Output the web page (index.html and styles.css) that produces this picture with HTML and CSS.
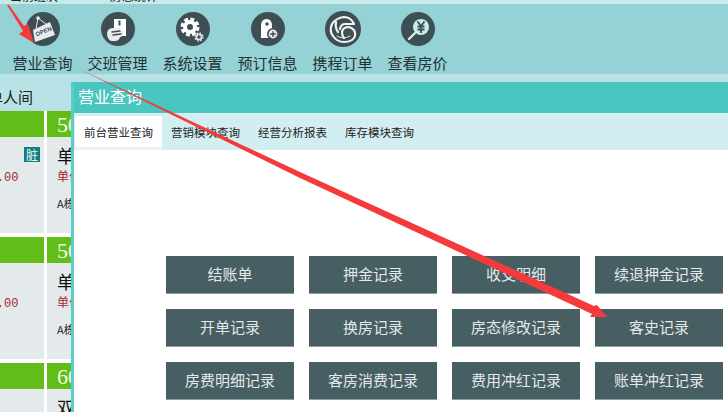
FILE: index.html
```html
<!DOCTYPE html>
<html lang="zh-CN">
<head>
    <meta charset="UTF-8">
    <title>营业查询</title>
    <link rel="stylesheet" href="styles.css">
</head>
<body>

    <!-- Top strip, cut off by the screenshot -->
    <div class="top-strip">
        <span>当前班次</span>
        <span>房态统计</span>
    </div>

    <!-- Toolbar -->
    <nav class="toolbar">
        <a class="tool">
            <svg class="tool-icon" viewBox="0 0 34 34">
                <circle class="disc" cx="17" cy="17" r="17"/>
                <path class="line" d="M10 17 L12 6 L20 12"/>
                <circle class="pale" cx="12" cy="6" r="1.8"/>
                <polygon class="pale" points="7,18 24,10 29,23 9,30"/>
                <text class="open-text" x="10.5" y="24.5" transform="rotate(-22 10.5 24.5)">OPEN</text>
            </svg>
            <span>营业查询</span>
        </a>
        <a class="tool">
            <svg class="tool-icon" viewBox="0 0 34 34">
                <circle class="disc" cx="17" cy="17" r="17"/>
                <rect class="white" x="13" y="7" width="12" height="17"/>
                <rect class="disc" x="17.5" y="8.5" width="2" height="5"/>
                <path class="pale" d="M6 21 Q7 16 12 16 L19 16 Q21 17 19 19 L22 19 Q23 21 21 22 Q22 25 19 25 Q18 29 14 29 L10 29 Q6 27 6 21 Z"/>
                <path class="line-dark" d="M11 20 L19 19 M12 23 L20 22"/>
            </svg>
            <span>交班管理</span>
        </a>
        <a class="tool">
            <svg class="tool-icon" viewBox="0 0 34 34">
                <circle class="disc" cx="17" cy="17" r="17"/>
                <circle class="gear" cx="14" cy="15" r="5"/>
                <circle class="gear-teeth" cx="14" cy="15" r="8"/>
                <circle class="gear-small" cx="23" cy="25" r="2.6"/>
                <circle class="gear-small-teeth" cx="23" cy="25" r="4"/>
            </svg>
            <span>系统设置</span>
        </a>
        <a class="tool">
            <svg class="tool-icon" viewBox="0 0 34 34">
                <circle class="disc" cx="17" cy="17" r="17"/>
                <path class="white" d="M10 14 Q10 7 15.500 7 Q21 7 21 14 L21 26 L10 26 Z"/>
                <circle class="disc" cx="16" cy="12" r="1.800"/>
                <circle class="disc" cx="22" cy="22" r="6"/>
                <circle class="pale" cx="22" cy="22" r="4.400"/>
                <path class="line-dark" d="M19.600 22 H24.400 M22 19.600 V24.400"/>
            </svg>
            <span>预订信息</span>
        </a>
        <a class="tool">
            <svg class="tool-icon tool-icon-big" viewBox="0 0 36 36">
                <circle class="disc" cx="18" cy="18" r="18"/>
                <path class="line-wide" d="M29 13 Q26 6 19 6 Q11 7 7 13 Q4 20 8 25 Q12 31 19 31 Q28 31 30 25 Q31 18 24 16 Q18 16 17 21 Q17 25 19 27"/>
                <path class="line-wide" d="M29 13 L20 13 Q16 13 15 18 M11 11 Q10 17 13 21"/>
                <path class="line" d="M12 25 Q18 29 25 25"/>
            </svg>
            <span>携程订单</span>
        </a>
        <a class="tool">
            <svg class="tool-icon" viewBox="0 0 34 34">
                <circle class="disc" cx="17" cy="17" r="17"/>
                <circle class="mint" cx="20" cy="15" r="8"/>
                <path class="line-yen" d="M16.500 9.500 L20 14 L23.500 9.500 M20 14 V21 M16.500 14.500 H23.500 M16.500 17.500 H23.500"/>
                <path class="line-thick" d="M14 21 L8 27"/>
            </svg>
            <span>查看房价</span>
        </a>
    </nav>

    <div class="room-type">单人间</div>

    <!-- Room cards -->
    <div class="rooms">
        <div class="room">
            <div class="room-no">501</div>
            <div class="room-body">
                <div class="room-name">单人间<span class="dirty">脏</span></div>
                <div class="room-price">单价:260.00</div>
                <div class="room-floor">A栋五层</div>
            </div>
        </div>
        <div class="room">
            <div class="room-no">502</div>
            <div class="room-body">
                <div class="room-name">单人间</div>
                <div class="room-price">单价:260.00</div>
                <div class="room-floor">A栋五层</div>
            </div>
        </div>
        <div class="room">
            <div class="room-no">503</div>
            <div class="room-body">
                <div class="room-name">单人间</div>
                <div class="room-price">单价:260.00</div>
                <div class="room-floor">A栋五层</div>
            </div>
        </div>
        <div class="room">
            <div class="room-no">505</div>
            <div class="room-body">
                <div class="room-name">单人间</div>
                <div class="room-price">单价:260.00</div>
                <div class="room-floor">A栋五层</div>
            </div>
        </div>
        <div class="room">
            <div class="room-no">601</div>
            <div class="room-body">
                <div class="room-name">双人间</div>
            </div>
        </div>
        <div class="room">
            <div class="room-no">602</div>
            <div class="room-body">
                <div class="room-name">双人间</div>
            </div>
        </div>
    </div>

    <!-- Query window -->
    <section class="window">
        <h1 class="window-title">营业查询</h1>
        <div class="tabs">
            <a class="tab active">前台营业查询</a>
            <a class="tab">营销模块查询</a>
            <a class="tab">经营分析报表</a>
            <a class="tab">库存模块查询</a>
        </div>
        <div class="report-grid">
            <a class="report">结账单</a>
            <a class="report">押金记录</a>
            <a class="report">收支明细</a>
            <a class="report">续退押金记录</a>
            <a class="report">开单记录</a>
            <a class="report">换房记录</a>
            <a class="report">房态修改记录</a>
            <a class="report">客史记录</a>
            <a class="report">房费明细记录</a>
            <a class="report">客房消费记录</a>
            <a class="report">费用冲红记录</a>
            <a class="report">账单冲红记录</a>
        </div>
    </section>

    <!-- Red arrows drawn over the screenshot -->
    <svg class="arrows" viewBox="0 0 728 412">
        <polygon points="7,5 9,5 24,26 28,24 34,43 19,34 23,31"/>
        <polygon points="75,67 300,172 594,306 597,305 607,317 590,317 592,314 300,178"/>
    </svg>

</body>
</html>
```

FILE: styles.css
```css
* {
    margin: 0;
    padding: 0;
    box-sizing: border-box;
}

html {
    overflow: hidden;
}

body {
    position: relative;
    width: 728px;
    height: 412px;
    overflow: hidden;
    font-family: "Noto Sans CJK SC", sans-serif;
    background-color: #ffffff;
    color: #222;
}

/* Top strip */
.top-strip {
    display: flex;
    gap: 52px;
    height: 4px;
    padding-left: 10px;
    overflow: hidden;
    background-color: #c9eaec;
    font-size: 12px;
    line-height: 0;
}

.top-strip span {
    margin-top: -4px;
}

/* Toolbar */
.toolbar {
    display: flex;
    height: 70px;
    padding-left: 5px;
    background-color: #95d2d6;
}

.tool {
    display: flex;
    flex-direction: column;
    align-items: center;
    width: 75px;
    padding-top: 8px;
    font-size: 15px;
    line-height: 20px;
    color: #243033;
}

.tool span {
    margin-top: 7px;
}

.tool-icon {
    width: 34px;
    height: 34px;
}

.tool-icon-big {
    width: 36px;
    height: 36px;
    margin: -1px 0;
}

.disc { fill: #3e4e55; }
.white { fill: #ffffff; }
.pale { fill: #e8ecee; }
.mint { fill: #c4efe4; }

.line,
.line-wide,
.line-dark,
.line-yen,
.line-thick {
    fill: none;
    stroke-linecap: round;
}

.line { stroke: #e8e8e8; stroke-width: 1; }
.line-wide { stroke: #f2f2f2; stroke-width: 2.2; }
.line-dark { stroke: #3e4e55; stroke-width: 1.4; }
.line-yen { stroke: #3e4e55; stroke-width: 1.8; stroke-linecap: butt; }
.line-thick { stroke: #e8f3f0; stroke-width: 2.2; }

.open-text {
    font-family: "Liberation Sans", sans-serif;
    font-size: 6px;
    font-weight: bold;
    fill: #3e4e55;
}

.gear { fill: none; stroke: #ffffff; stroke-width: 4; }
.gear-teeth { fill: none; stroke: #ffffff; stroke-width: 3; stroke-dasharray: 4 2.3; }
.gear-small { fill: none; stroke: #dfe3e3; stroke-width: 1.8; }
.gear-small-teeth { fill: none; stroke: #dfe3e3; stroke-width: 1.4; stroke-dasharray: 1.6 1.55; }

/* Room list */
.room-type {
    height: 37px;
    margin-left: -12px;
    background-color: #b8e2e5;
    font-size: 15px;
    line-height: 45px;
}

.rooms {
    display: grid;
    grid-template-columns: 110px 110px;
    gap: 4px 3px;
    height: 301px;
    margin-left: -66px;
    overflow: hidden;
    background-color: #ffffff;
}

.room-no {
    height: 26px;
    padding-left: 10px;
    background-color: #62bd18;
    color: #f2fbe6;
    font-family: "Liberation Serif", serif;
    font-size: 22px;
    line-height: 28px;
}

.room-body {
    position: relative;
    height: 96px;
    padding: 6px 10px 0;
    background-color: #e4e9ec;
}

.room-name {
    font-size: 18px;
    line-height: 24px;
    color: #111;
}

.dirty {
    position: absolute;
    top: 10px;
    right: 4px;
    width: 16px;
    height: 15px;
    background-color: #0f7f86;
    color: #e8f6f6;
    font-size: 12px;
    line-height: 15px;
    text-align: center;
}

.room-price {
    margin-top: 3px;
    font-family: "Liberation Mono", "Noto Sans CJK SC", monospace;
    font-size: 12px;
    line-height: 17px;
    color: #a5282c;
}

.room-floor {
    margin-top: 8px;
    font-size: 11px;
    line-height: 16px;
    color: #222;
}

/* Query window */
.window {
    position: absolute;
    left: 71px;
    top: 82px;
    width: 657px;
    height: 330px;
    border-left: 3px solid #5bcbc8;
    background-color: #ffffff;
}

.window-title {
    height: 31px;
    padding-left: 4px;
    background-color: #48c6bf;
    color: #ffffff;
    font-size: 16px;
    font-weight: 400;
    line-height: 29px;
}

.tabs {
    display: flex;
    height: 37px;
    padding: 3px 0 0 1px;
    background-color: #d2eef0;
}

.tab {
    width: 87px;
    height: 34px;
    font-size: 11.5px;
    line-height: 33px;
    text-align: center;
    color: #222;
}

.tab.active {
    background-color: #ffffff;
    border-bottom: 3px solid #f0f0f0;
}

.report-grid {
    display: grid;
    grid-template-columns: repeat(4, 128px);
    grid-auto-rows: 38px;
    gap: 15px;
    padding: 106px 0 0 92px;
}

.report {
    background-color: #475e63;
    border-bottom: 1px solid #8a9fa4;
    color: #e4e9e9;
    font-size: 15px;
    line-height: 36px;
    text-align: center;
}

/* Arrows */
.arrows {
    position: absolute;
    left: 0;
    top: 0;
    width: 728px;
    height: 412px;
    fill: #f43a3a;
}
```
